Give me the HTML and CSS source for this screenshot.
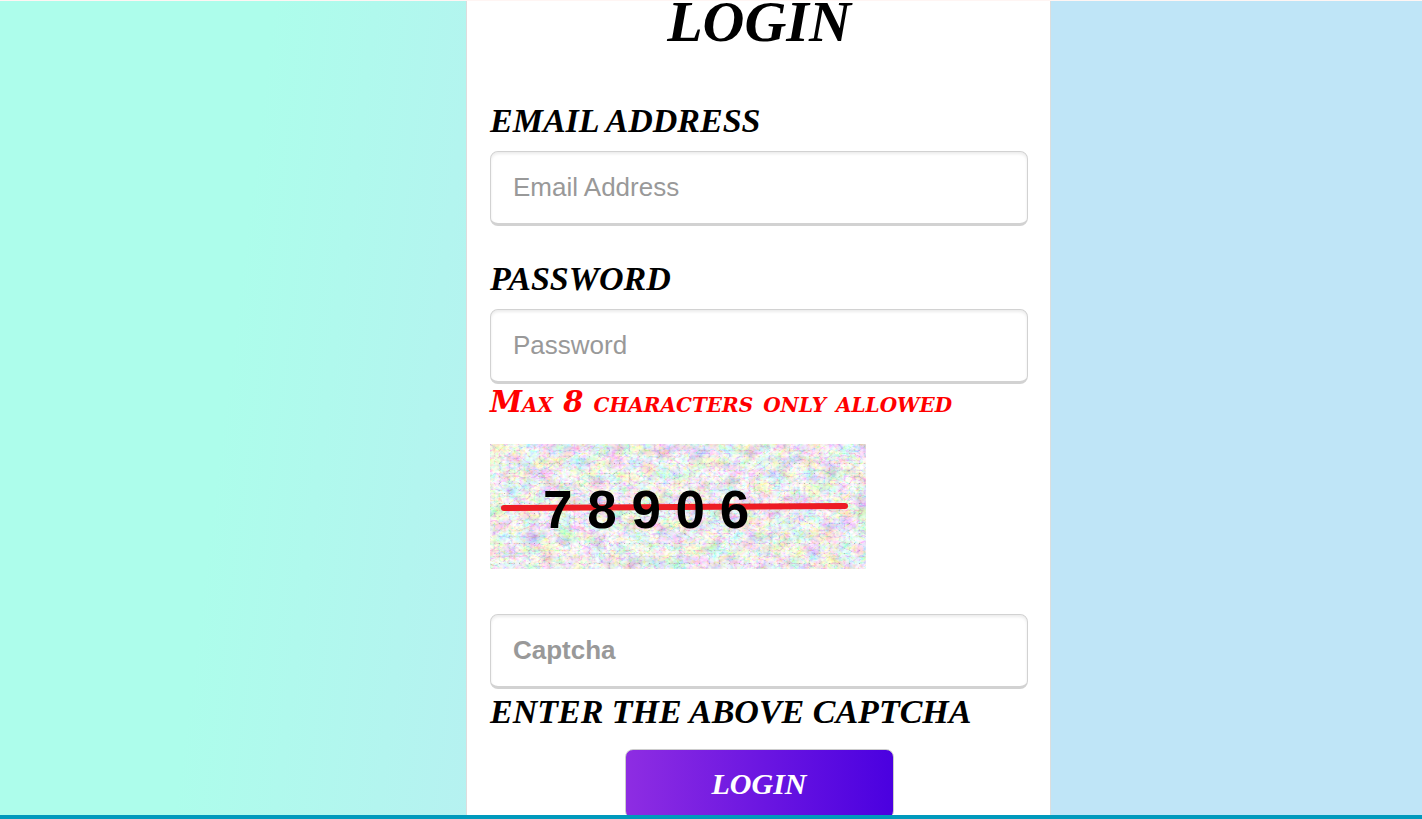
FILE: index.html
```html
<!DOCTYPE html>
<html lang="en">
<head>
  <meta charset="UTF-8" />
  <meta name="viewport" content="width=device-width, initial-scale=1.0"/>
  <title>Login</title>
  <link rel="stylesheet" href="styles.css">
</head>
<body>
  <main class="page">
    <form class="login-card">
      <h1>LOGIN</h1>

      <div class="form-group">
        <label for="email">EMAIL ADDRESS</label>
        <input type="email" id="email" class="form-control" placeholder="Email Address">
      </div>

      <div class="form-group">
        <label for="password">PASSWORD</label>
        <input type="password" id="password" class="form-control" placeholder="Password" maxlength="8">
        <p class="hint">Max 8 characters only allowed</p>
      </div>

      <svg class="captcha-image" viewBox="0 0 376 125" role="img" aria-label="Captcha">
        <filter id="noise" x="0" y="0" width="100%" height="100%" color-interpolation-filters="sRGB">
          <feTurbulence type="fractalNoise" baseFrequency="0.06 0.08" numOctaves="3" seed="8" result="blobs"/>
          <feColorMatrix in="blobs" type="matrix" values="0.5 0 0 0 0.72  0 0.5 0 0 0.72  0 0 0.5 0 0.72  0 0 0 0 1" result="pastel"/>
          <feTurbulence type="turbulence" baseFrequency="0.1 0.15" numOctaves="3" seed="3" result="veins"/>
          <feColorMatrix in="veins" type="matrix" values="1.2 0 0 0 0.74  0 1.2 0 0 0.74  0 0 1.2 0 0.74  0 0 0 0 1" result="lines"/>
          <feTurbulence type="fractalNoise" baseFrequency="0.3 0.35" numOctaves="1" seed="5" result="grain"/>
          <feColorMatrix in="grain" type="matrix" values="0.4 0 0 0 0.78  0 0.4 0 0 0.78  0 0 0.4 0 0.78  0 0 0 0 1" result="speckle"/>
          <feBlend in="pastel" in2="lines" mode="multiply" result="base"/>
          <feBlend in="base" in2="speckle" mode="multiply"/>
        </filter>
        <rect width="376" height="125" filter="url(#noise)"/>
        <line class="strike" x1="14" y1="64" x2="355" y2="62"/>
        <text x="53" y="84">7 8 9 0 6</text>
      </svg>

      <div class="form-group">
        <input type="text" id="captcha" class="form-control captcha-input" placeholder="Captcha">
        <label for="captcha" class="captcha-label">ENTER THE ABOVE CAPTCHA</label>
      </div>

      <button type="submit" class="btn-login">LOGIN</button>
    </form>
  </main>
  <footer></footer>
</body>
</html>
```

FILE: styles.css
```css
* {
  box-sizing: border-box;
}

body {
  margin: 0;
  height: 100vh;
  display: flex;
  flex-direction: column;
  overflow: hidden;
  font-family: Georgia, "Liberation Serif", serif;
  font-style: italic;
  font-weight: bold;
  color: #000;
}

.page {
  flex: 1;
  min-height: 0;
  overflow: hidden;
  display: grid;
  grid-template-columns: 466fr 585fr 371fr;
  border-top: 1px solid #fff5f3;
  background: linear-gradient(97deg, #adfdeb 18%, #bfe5f7 58%);
}

.login-card {
  grid-column: 2;
  padding: 0 22px 40px 23px;
  background: #fff;
  border: 1px solid #ddd;
  border-width: 0 1px;
}

h1 {
  margin: 0 0 58px;
  font-size: 58px;
  line-height: 42px;
  text-align: center;
}

label {
  display: block;
  margin-bottom: 10px;
  font-size: 34px;
  line-height: 40px;
}

.form-group + .form-group {
  margin-top: 33px;
}

.form-control {
  display: block;
  width: 100%;
  height: 75px;
  padding: 0 22px;
  border: 1px solid #d2d2d2;
  border-bottom-width: 3px;
  border-radius: 8px;
  box-shadow: inset 0 2px 3px rgba(0, 0, 0, 0.08);
  font-family: "Liberation Sans", Arial, sans-serif;
  font-size: 26px;
}

.form-control::placeholder {
  color: #999;
  opacity: 1;
}

.hint {
  margin: 0 0 24px;
  font-family: Georgia, "DejaVu Serif", serif;
  font-size: 29px;
  line-height: 36px;
  font-variant: small-caps;
  white-space: nowrap;
  color: #f00;
}

.captcha-image {
  display: block;
  width: 376px;
  max-width: 100%;
  margin-bottom: 45px;
}

.captcha-image text {
  font: bold 53px "Liberation Sans", Arial, sans-serif;
}

.strike {
  stroke: #ed1c24;
  stroke-width: 6;
  stroke-linecap: round;
}

.captcha-input {
  font-weight: bold;
}

.captcha-label {
  margin: 3px 0 17px;
}

.btn-login {
  display: block;
  width: 50%;
  height: 70px;
  margin: 0 auto;
  border: 1px solid #ccc;
  border-radius: 8px;
  background: linear-gradient(to right, #8e2de2, #4a00e0) border-box;
  color: #fff;
  font: inherit;
  font-size: 30px;
  cursor: pointer;
}

footer {
  height: 4px;
  background: #0099bc;
}
```
